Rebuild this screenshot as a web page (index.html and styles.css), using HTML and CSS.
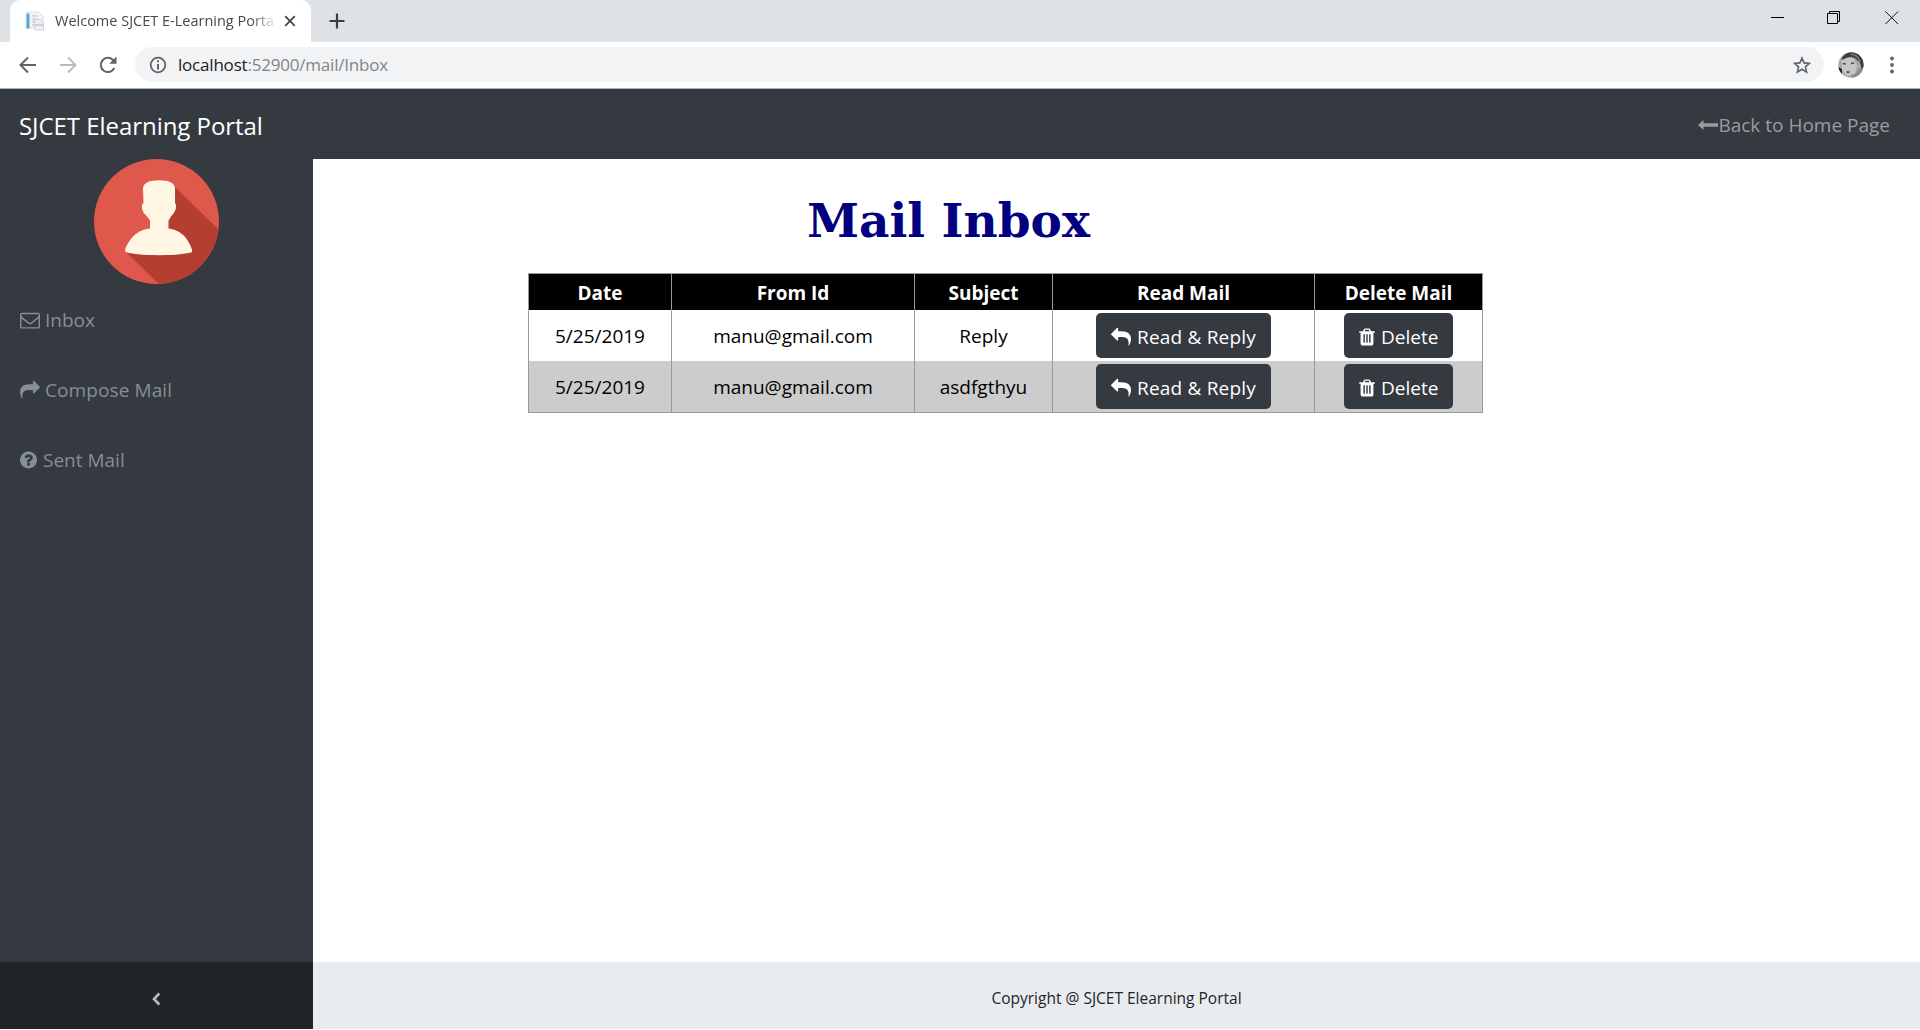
FILE: index.html
```
<!DOCTYPE html>
<html lang="en">
<head>
<meta charset="utf-8">
<title>Welcome SJCET E-Learning Portal</title>
<link rel="stylesheet" href="styles.css">
</head>
<body>
<svg class="sprite" aria-hidden="true">
  <symbol id="envelope" viewBox="0 0 1792 1792"><path d="M1664 1504v-768q-32 36-69 66-268 206-426 338-51 43-83 67t-86.5 48.5-102.5 24.5h-2q-48 0-102.5-24.5t-86.5-48.5-83-67q-158-132-426-338-37-30-69-66v768q0 13 9.5 22.5t22.5 9.5h1472q13 0 22.5-9.5t9.5-22.5zm0-1051v-24.5l-.5-13-3-12.5-5.5-9-9-7.5-14-2.5h-1472q-13 0-22.5 9.5t-9.5 22.5q0 168 147 284 193 152 401 317 6 5 35 29.5t46 37.5 44.5 31.5 50.5 27.5 43 9h2q20 0 43-9t50.5-27.5 44.5-31.5 46-37.5 35-29.5q208-165 401-317 54-43 100.5-115.5t46.5-131.5zm128-37v1088q0 66-47 113t-113 47h-1472q-66 0-113-47t-47-113v-1088q0-66 47-113t113-47h1472q66 0 113 47t47 113z"/></symbol>
  <symbol id="share" viewBox="0 0 1792 1792"><path d="M1792 640q0 26-19 45l-512 512q-19 19-45 19t-45-19-19-45v-256h-224q-98 0-175.5 6t-154 21.5-133 42.5-105.5 69.5-80 101-48.5 138.5-17.5 181q0 55 5 123 0 6 2.5 23.5t2.5 26.5q0 15-8.5 25t-23.5 10q-16 0-28-17-7-9-13-22t-13.5-30-10.5-24q-127-285-127-451 0-199 53-333 162-403 875-403h224v-256q0-26 19-45t45-19 45 19l512 512q19 19 19 45z"/></symbol>
  <symbol id="question" viewBox="128 0 1536 1792"><path d="M1024 1376v-192q0-14-9-23t-23-9h-192q-14 0-23 9t-9 23v192q0 14 9 23t23 9h192q14 0 23-9t9-23zm256-672q0-88-55.5-163t-138.5-116-170-41q-243 0-371 213-15 24 8 42l132 100q7 6 19 6 16 0 25-12 53-68 86-92 34-24 86-24 48 0 85.500 26t37.500 59q0 38-20 61t-68 45q-63 28-115.500 86.500t-52.500 125.500v36q0 14 9 23t23 9h192q14 0 23-9t9-23q0-19 21.500-49.500t54.500-49.500q32-18 49-28.500t46-35 44.500-48 28-60.500 12.500-81zm384 192q0 209-103 385.500t-279.500 279.500-385.500 103-385.500-103-279.500-279.500-103-385.500 103-385.500 279.500-279.500 385.500-103 385.500 103 279.500 279.500 103 385.500z"/></symbol>
  <symbol id="trash" viewBox="192 0 1408 1792"><path d="M704 1376v-704q0-14-9-23t-23-9h-64q-14 0-23 9t-9 23v704q0 14 9 23t23 9h64q14 0 23-9t9-23zm256 0v-704q0-14-9-23t-23-9h-64q-14 0-23 9t-9 23v704q0 14 9 23t23 9h64q14 0 23-9t9-23zm256 0v-704q0-14-9-23t-23-9h-64q-14 0-23 9t-9 23v704q0 14 9 23t23 9h64q14 0 23-9t9-23zm-544-992h448l-48-117q-7-9-17-11h-317q-10 2-17 11zm928 32v64q0 14-9 23t-23 9h-96v948q0 83-47 143.500t-113 60.500h-832q-66 0-113-58.500t-47-141.500v-952h-96q-14 0-23-9t-9-23v-64q0-14 9-23t23-9h309l70-167q15-37 54-63t79-26h320q40 0 79 26t54 63l70 167h309q14 0 23 9t9 23z"/></symbol>
</svg>

<header class="browser">
  <div class="tabstrip">
    <div class="tab">
      <svg class="favicon" viewBox="0 0 20 20"><path d="M1 1h13l4 4v12H1z" fill="#f3f4f6" stroke="#d6d9dd" stroke-width=".8"/><path d="M1.500 2.500h3v15h-3z" fill="#5aa5d8"/><path d="M7 5h6M7 8h4M7 11h3M7 14h2" stroke="#b9bdc4"/><path d="M9.500 8.500h6l3 3v7.500h-9z" fill="#eceef1" stroke="#c6cad3" stroke-width=".8"/><path d="M10 14h8.500" stroke="#aeb4c0"/></svg>
      <span class="tab-title">Welcome SJCET E-Learning Porta</span>
      <svg class="tab-close" viewBox="0 0 12 12"><path d="M1.200 1.200l9.600 9.600M10.800 1.200l-9.600 9.600" stroke="#45494d" stroke-width="1.900"/></svg>
    </div>
    <svg class="new-tab" viewBox="0 0 16 16"><path d="M8 .5v15M.5 8h15" stroke="#3c4043" stroke-width="2.200"/></svg>
    <div class="window-buttons">
      <svg width="14" height="14" viewBox="0 0 14 14"><path d="M0 6.500h13" stroke="#000"/></svg>
      <svg width="14" height="14" viewBox="0 0 14 14"><path d="M.5 2.500h10v10H.5zM2.500 2.500v-2h10v10h-2" fill="none" stroke="#000"/></svg>
      <svg width="14" height="14" viewBox="0 0 14 14"><path d="M.5 .5l12.500 12.500M13 .5L.5 13" stroke="#111"/></svg>
    </div>
  </div>
  <div class="toolbar">
    <svg class="tool" width="18" height="18" viewBox="0 0 18 18"><path d="M17 9H2M9 1.500L1.500 9L9 16.500" fill="none" stroke="#5f6368" stroke-width="2"/></svg>
    <svg class="tool" width="18" height="18" viewBox="0 0 18 18"><path d="M1 9h15M9 1.500L16.500 9L9 16.500" fill="none" stroke="#babcbe" stroke-width="2"/></svg>
    <svg class="tool" width="18" height="18" viewBox="0 0 18 18"><path d="M15.300 12A7.100 7.100 0 1 1 13.800 3.800L15.500 5.600" fill="none" stroke="#5f6368" stroke-width="2"/><path d="M17.500 .5v7.300h-7.300z" fill="#5f6368"/></svg>
    <div class="omnibox">
      <svg width="18" height="18" viewBox="0 0 18 18"><circle cx="9" cy="9" r="7.300" fill="none" stroke="#5f6368" stroke-width="1.800"/><path d="M9 4.300v2M9 8v5.500" stroke="#5f6368" stroke-width="2"/></svg>
      <span class="url"><b>localhost</b>:52900/mail/Inbox</span>
      <svg class="star" width="18" height="18" viewBox="0 0 18 18"><path d="M9 2l2.100 4.900 5.300 .5-4 3.500 1.200 5.200L9 13.300l-4.600 2.800 1.200-5.200-4-3.500 5.300-.5z" fill="none" stroke="#5f6368" stroke-width="1.600"/></svg>
    </div>
    <svg class="profile" width="26" height="26" viewBox="0 0 26 26"><defs><clipPath id="face"><circle cx="13" cy="13" r="12.700"/></clipPath></defs><g clip-path="url(#face)"><path d="M0 0h26v26H0z" fill="#a9aaa8"/><path d="M4 8Q9 4 15 6l4 8-2 8-8 2-5-6z" fill="#c6c7c4"/><path d="M4 6Q8-1 17 0q9 3 9 14l-3 4q1-7-4-10Q14 2 4 8z" fill="#3d3f3e"/><path d="M13 2q7 1 9 8" stroke="#7b7d7b" stroke-width="1.500" fill="none"/><path d="M0 15l4 2v5H0z" fill="#222"/><path d="M5 11.500l2.500 .5M13 11.500l3-.5" stroke="#444" stroke-width="1.700"/><path d="M8 20q2-2 4 0l-2 1.500z" fill="#4f504f"/><path d="M13 23q6-1 8-7l5 3v7H14z" fill="#8e908d"/></g></svg>
    <svg class="menu" width="4" height="18" viewBox="0 0 4 18"><circle cx="2" cy="2.500" r="1.900"/><circle cx="2" cy="9" r="1.900"/><circle cx="2" cy="15.500" r="1.900"/></svg>
  </div>
</header>

<nav class="topbar">
  <a class="brand">SJCET Elearning Portal</a>
  <a class="home-link"><svg width="20" height="10" viewBox="0 0 20 10"><path d="M0 5L5.500 0v3.300H20v3.400H5.500V10z"/></svg>Back to Home Page</a>
</nav>

<div class="page">
  <aside class="sidebar">
    <svg class="avatar" viewBox="0 0 125 125">
      <defs><clipPath id="disc"><circle cx="62.500" cy="62.500" r="62.500"/></clipPath></defs>
      <g clip-path="url(#disc)">
        <path d="M0 0h125v125H0z" fill="#de584c"/>
        <path d="M80 27l50 49v60H76L32 93l40-25z" fill="#b63e31"/>
        <path d="M49 29Q50 21.300 65 21.300T81 29V44Q82.500 45 81.800 50 80 55 77 57.500L74.500 61.500V69.500Q91 71 98 90.500V93Q90 96 65 96.200 40 96 31.500 93 30.500 91 32 88 40 71 56 69.500V61.500L53 57.500Q49 54 48 50 47.500 45 49.500 44z" fill="#fff7e4"/>
      </g>
    </svg>
    <ul class="side-links">
      <li><svg class="fa"><use href="#envelope"/></svg>Inbox</li>
      <li class="compose"><svg class="fa"><use href="#share"/></svg>Compose Mail</li>
      <li><svg class="fa fa-question"><use href="#question"/></svg>Sent Mail</li>
    </ul>
    <div class="toggler"><svg width="9" height="14" viewBox="0 0 9 14"><path d="M7.300 1.500L2 7l5.300 5.500" fill="none" stroke="#b4bbc2" stroke-width="2.600"/></svg></div>
  </aside>

  <main class="content">
    <h1>Mail Inbox</h1>
    <table class="mail">
      <colgroup><col class="c-date"><col class="c-from"><col class="c-subject"><col class="c-read"><col class="c-delete"></colgroup>
      <thead>
        <tr><th>Date</th><th>From Id</th><th>Subject</th><th>Read Mail</th><th>Delete Mail</th></tr>
      </thead>
      <tbody>
        <tr>
          <td>5/25/2019</td><td>manu@gmail.com</td><td>Reply</td>
          <td><button class="btn btn-read"><svg class="fa flip"><use href="#share"/></svg>Read &amp; Reply</button></td>
          <td><button class="btn btn-delete"><svg class="fa fa-trash"><use href="#trash"/></svg>Delete</button></td>
        </tr>
        <tr>
          <td>5/25/2019</td><td>manu@gmail.com</td><td>asdfgthyu</td>
          <td><button class="btn btn-read"><svg class="fa flip"><use href="#share"/></svg>Read &amp; Reply</button></td>
          <td><button class="btn btn-delete"><svg class="fa fa-trash"><use href="#trash"/></svg>Delete</button></td>
        </tr>
      </tbody>
    </table>
    <footer class="footer">Copyright @ SJCET Elearning Portal</footer>
  </main>
</div>
</body>
</html>
```
FILE: styles.css
```
* { box-sizing: border-box; }

body {
  margin: 0;
  height: 1030px;
  display: flex;
  flex-direction: column;
  overflow: hidden;
  background: #fff;
  font: 19px/28px "Open Sans", "Noto Sans", sans-serif;
  color: #212529;
}

svg { flex: none; display: block; }
.sprite { display: none; }

/* Browser window */
.tabstrip {
  height: 42px;
  display: flex;
  align-items: center;
  padding-left: 10px;
  background: #dee1e6;
}
.tab {
  width: 301px;
  height: 42px;
  display: flex;
  align-items: center;
  padding: 0 15px;
  border-radius: 10px 10px 0 0;
  background: #fff;
}
.favicon { width: 20px; height: 20px; }
.tab-title {
  width: 220px;
  margin-left: 10px;
  white-space: nowrap;
  font-size: 14.5px;
  line-height: 41px;
  height: 42px;
  color: #45494d;
  -webkit-mask-image: linear-gradient(90deg, #000 196px, transparent 222px);
  mask-image: linear-gradient(90deg, #000 196px, transparent 222px);
}
.tab-close { width: 12px; height: 12px; margin-left: 10px; }
.new-tab { width: 16px; height: 16px; margin-left: 18px; }
.window-buttons {
  margin-left: auto;
  display: flex;
  gap: 43px;
  padding: 0 21px 6px 0;
}
.window-buttons svg:first-child { margin-right: -1px; }
.window-buttons svg:last-child { margin-left: 1px; }

.toolbar {
  height: 47px;
  display: flex;
  align-items: center;
  padding: 0 26px 1px 19px;
  border-bottom: 1px solid #b0b0b0;
  background: #fff;
}
.tool { margin-right: 22px; }
.omnibox {
  flex: 1;
  height: 35px;
  margin-left: -4px;
  display: flex;
  align-items: center;
  padding: 0 13px 0 14px;
  border-radius: 18px;
  background: #f1f3f4;
}
.url {
  margin-left: 11px;
  font-size: 17px;
  letter-spacing: -.2px;
  color: #80868b;
}
.url b { font-weight: 400; color: #202124; }
.star { margin-left: auto; }
.profile { margin-left: 14px; }
.menu { margin-left: 26px; fill: #5f6368; }

/* Portal header */
.topbar {
  height: 70px;
  display: flex;
  align-items: center;
  justify-content: space-between;
  padding: 2px 30px 0 19px;
  background: #343a40;
}
.brand { padding-top: 2px; font-size: 24px; letter-spacing: -.05px; color: #fff; }
.home-link {
  display: flex;
  align-items: center;
  color: #999da0;
}
.home-link svg { fill: currentColor; margin-top: -1px; }

.page { flex: none; height: 870px; display: flex; }

/* Sidebar */
.sidebar {
  width: 313px;
  display: flex;
  flex-direction: column;
  background: #343a40;
}
.avatar { width: 125px; height: 125px; margin: 0 auto 1px; }
.side-links {
  margin: 0;
  padding: 0 20px;
  list-style: none;
  color: #868e96;
}
.side-links li {
  height: 70px;
  display: flex;
  align-items: center;
  gap: 5px;
}
.compose { letter-spacing: .1px; }
.fa { width: 20px; height: 20px; fill: currentColor; }
.fa-question { width: 17px; margin-right: 1px; }
.toggler {
  height: 67px;
  margin-top: auto;
  display: grid;
  place-items: center;
  padding-top: 6px;
  background: #212529;
}

/* Inbox */
.content {
  flex: 1;
  display: flex;
  flex-direction: column;
}
h1 {
  margin: 32px 0 0 494px;
  font: 700 47px/60px "DejaVu Serif", serif;
  color: #000080;
}
.mail {
  width: 955px;
  margin: 22px 0 0 215px;
  table-layout: fixed;
  border-collapse: separate;
  border-spacing: 0;
  border: solid #999;
  border-width: 1px 1px 1px 0;
  text-align: center;
  color: #000;
}
.c-date { width: 143px; }
.c-from { width: 243px; }
.c-subject { width: 138px; }
.c-read { width: 262px; }
.mail th, .mail td { padding: 0; border-left: 1px solid #999; }
.mail th { height: 36px; padding-top: 2px; background: #000; color: #fff; }
.mail td { height: 51px; }
.mail tbody tr:nth-child(even) { background: #ccc; }
.btn {
  height: 45px;
  display: flex;
  align-items: center;
  gap: 6px;
  margin: 0 auto;
  padding: 2px 0 0 15px;
  border: 0;
  border-radius: 5px;
  background: #343a40;
  color: #fff;
  font: inherit;
}
.btn-read { width: 175px; letter-spacing: .2px; }
.btn-delete { width: 109px; }
.fa-trash { width: 16px; }
.flip { transform: scaleX(-1); }

.footer {
  height: 67px;
  margin-top: auto;
  padding-top: 6px;
  background: #e9ecef;
  font-size: 15.5px;
  line-height: 61px;
  text-align: center;
}
```
